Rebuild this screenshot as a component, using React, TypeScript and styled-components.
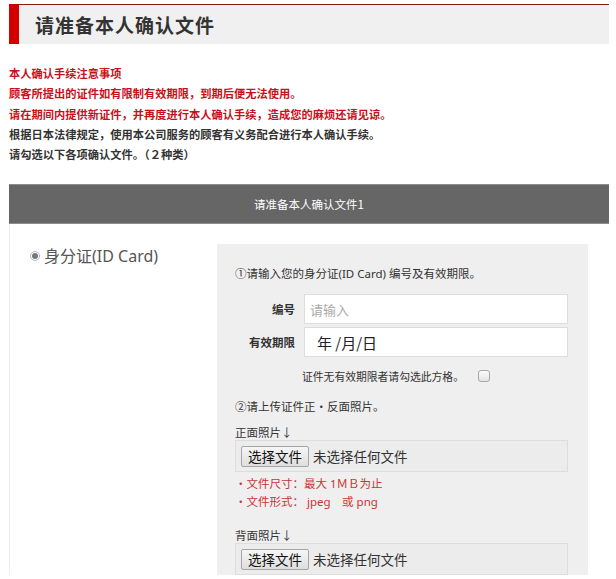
import React from "react";
import styled, { createGlobalStyle } from "styled-components";

const GlobalStyle = createGlobalStyle`
  html, body { margin: 0; padding: 0; background: #fff; }
  body {
    font-family: "Noto Sans", "Noto Sans CJK SC", sans-serif;
    color: #333;
  }
  * { box-sizing: border-box; }
`;

const Page = styled.div`
  width: 600px;
  margin-left: 9px;
  padding-top: 4px;
`;

const Header = styled.h1`
  margin: 0;
  height: 40px;
  display: flex;
  align-items: center;
  border-top: 1px solid #8a1c1c;
  border-left: 10px solid #d40000;
  background: #f0f0f0;
  padding-left: 16px;
  font-size: 19px;
  font-weight: 700;
  color: #333;
  letter-spacing: 1px;
  font-family: "Noto Sans CJK SC", sans-serif;
`;

const Notices = styled.div`
  margin-top: 19px;
  font-family: "Noto Sans CJK SC", sans-serif;
  font-size: 11.25px;
  line-height: 20.3px;
  font-weight: 700;
`;

const NoticeLine = styled.div<{ $warn?: boolean }>`
  color: ${(p) => (p.$warn ? "#c8101a" : "#333")};
  white-space: nowrap;
`;

const Section = styled.section`
  margin-top: 20px;
`;

const SectionBar = styled.div`
  height: 40px;
  background: #666;
  border-top: 1px solid #8c8c8c;
  border-bottom: 1px solid #8c8c8c;
  display: flex;
  align-items: center;
  justify-content: center;
  color: #fff;
  font-size: 11.5px;
  font-family: "Noto Sans CJK SC", sans-serif;
`;

const SectionBody = styled.div`
  display: flex;
  border-left: 1px solid #eee;
  padding-top: 20px;
`;

const Choice = styled.label`
  width: 207px;
  display: flex;
  align-items: flex-start;
  gap: 4px;
  padding-left: 20px;
  font-size: 16px;
  line-height: 24px;
  color: #555;
`;

const Radio = styled.span`
  margin-top: 7px;
  width: 10px;
  height: 10px;
  border-radius: 50%;
  border: 1px solid #bbb;
  background: #fff;
  display: flex;
  align-items: center;
  justify-content: center;
  &::after {
    content: "";
    width: 6px;
    height: 6px;
    border-radius: 50%;
    background: #777;
  }
`;

const Box = styled.div`
  width: 371px;
  background: #efefef;
  padding: 21px 20px 0 18px;
  font-size: 11.5px;
  color: #333;
  font-family: "Noto Sans", "Noto Sans CJK SC", sans-serif;
`;

const Text = styled.div<{ $mt?: number; $lh?: number }>`
  line-height: ${(p) => p.$lh ?? 18}px;
  margin-top: ${(p) => p.$mt ?? 0}px;
  white-space: nowrap;
`;

const FieldRow = styled.div<{ $mt: number }>`
  display: flex;
  align-items: center;
  gap: 9px;
  margin-top: ${(p) => p.$mt}px;
`;

const FieldLabel = styled.span`
  width: 60px;
  text-align: right;
  font-weight: 700;
  font-size: 11.5px;
  font-family: "Noto Sans CJK SC", sans-serif;
`;

const Field = styled.div<{ $placeholder?: boolean }>`
  width: 264px;
  height: 30px;
  background: #fff;
  border: 1px solid #ddd;
  display: flex;
  align-items: center;
  padding-left: ${(p) => (p.$placeholder ? 5 : 12)}px;
  font-size: ${(p) => (p.$placeholder ? 13 : 15)}px;
  color: ${(p) => (p.$placeholder ? "#aaa" : "#222")};
  font-family: "Noto Sans CJK SC", sans-serif;
`;

const CheckRow = styled.div`
  display: flex;
  align-items: center;
  gap: 14px;
  margin-top: 9px;
  padding-left: 67px;
  height: 20px;
  font-size: 10.8px;
  font-family: "Noto Sans CJK SC", sans-serif;
`;

const CheckBox = styled.span`
  width: 12px;
  height: 12px;
  border: 1px solid #a8a8a8;
  border-radius: 3px;
  background: linear-gradient(#fafafa, #e4e4e4);
`;

const FileBox = styled.div<{ $mt: number }>`
  margin-top: ${(p) => p.$mt}px;
  width: 333px;
  height: 32px;
  border: 1px solid #ddd;
  background: #ececec;
  display: flex;
  align-items: center;
  gap: 4px;
  padding-left: 5px;
  font-size: 13.5px;
  color: #333;
  font-family: "Noto Sans CJK SC", sans-serif;
`;

const FileButton = styled.span`
  height: 21px;
  padding: 0 6px;
  display: flex;
  align-items: center;
  border: 1px solid #a6a6a6;
  border-radius: 2px;
  background: linear-gradient(#f6f6f6, #dedede);
  color: #111;
`;

const Hint = styled.div`
  margin-top: 3px;
  color: #cc3333;
  font-size: 11.5px;
  line-height: 18px;
`;

const UploadField = ({ mt }: { mt: number }) => (
  <FileBox $mt={mt}>
    <FileButton>选择文件</FileButton>
    <span>未选择任何文件</span>
  </FileBox>
);

export default function App() {
  return (
    <>
      <GlobalStyle />
      <Page>
        <Header>请准备本人确认文件</Header>
        <Notices>
          <NoticeLine $warn>本人确认手续注意事项</NoticeLine>
          <NoticeLine $warn>顾客所提出的证件如有限制有效期限，到期后便无法使用。</NoticeLine>
          <NoticeLine $warn>请在期间内提供新证件，并再度进行本人确认手续，造成您的麻烦还请见谅。</NoticeLine>
          <NoticeLine>根据日本法律规定，使用本公司服务的顾客有义务配合进行本人确认手续。</NoticeLine>
          <NoticeLine>请勾选以下各项确认文件。（２种类）</NoticeLine>
        </Notices>
        <Section>
          <SectionBar>请准备本人确认文件1</SectionBar>
          <SectionBody>
            <Choice>
              <Radio />
              <span>身分证(ID Card)</span>
            </Choice>
            <Box>
              <Text>①请输入您的身分证(ID Card) 编号及有效期限。</Text>
              <FieldRow $mt={11}>
                <FieldLabel>编号</FieldLabel>
                <Field $placeholder>请输入</Field>
              </FieldRow>
              <FieldRow $mt={3}>
                <FieldLabel>有效期限</FieldLabel>
                <Field>年 /月/日</Field>
              </FieldRow>
              <CheckRow>
                <span>证件无有效期限者请勾选此方格。</span>
                <CheckBox />
              </CheckRow>
              <Text $mt={12}>②请上传证件正・反面照片。</Text>
              <Text $mt={9} $lh={16}>正面照片↓</Text>
              <UploadField mt={-1} />
              <Hint>
                ・文件尺寸：最大 1ＭＢ为止
                <br />
                ・文件形式： jpeg　或 png
              </Hint>
              <Text $mt={17} $lh={16}>背面照片↓</Text>
              <UploadField mt={-1} />
            </Box>
          </SectionBody>
        </Section>
      </Page>
    </>
  );
}
